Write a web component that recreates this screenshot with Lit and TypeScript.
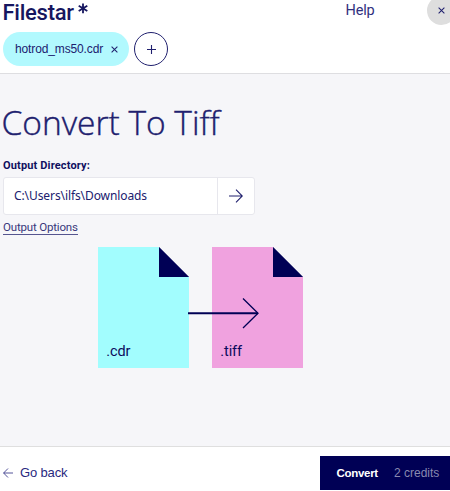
import { LitElement, html, css, svg } from "lit";
import { customElement, property } from "lit/decorators.js";

@customElement("file-sheet")
class FileSheet extends LitElement {
  @property() label = "";
  static styles = css`
    :host { display: flex; flex: none; align-items: flex-end; box-sizing: border-box; width: 90.5px; height: 120.5px; padding: 0 8px 7px;
      background: linear-gradient(45deg, #000055 49.5%, #f6f6f9 50.8%) top right / 30px 30px no-repeat, var(--sheet); }
    .label { font: 14.5px/18px Roboto, sans-serif; letter-spacing: -0.1px; color: #0b0b5c; white-space: nowrap; }
  `;
  render() {
    return html`<span class="label">${this.label}</span>`;
  }
}

@customElement("app-root")
class AppRoot extends LitElement {
  static styles = css`
    :host { display: flex; flex-direction: column; width: 450px; height: 491px; overflow: hidden; background: #f6f6f9; color: #20206e; font-family: Roboto, sans-serif; }
    * { box-sizing: border-box; }
    svg { display: block; flex: none; fill: none; stroke: currentColor; }
    .header { height: 74px; flex: none; background: #fff; border-bottom: 1px solid #dedee1; }
    .top { display: flex; height: 32px; align-items: flex-start; }
    .logo { flex: none; width: 74.5px; margin-left: 2.5px; font: 500 22px/25px Roboto, sans-serif; letter-spacing: -0.25px; color: #16165f; white-space: nowrap; }
    .star { color: #16165f; margin: 3px 0 0 1px; }
    .help { flex: none; margin: 0 0 0 257.5px; width: 80px; font: 14.5px/21px Roboto, sans-serif; letter-spacing: -0.15px; color: #30307e; }
    .close { display: grid; place-items: center; flex: none; width: 29px; height: 29px; margin-top: -4.5px; margin-left: 1.5px; border-radius: 50%; background: #dedede; }
    .tabs { display: flex; gap: 5px; padding-left: 3px; }
    .chip { display: flex; align-items: center; width: 126px; height: 34px; padding-left: 12px; border-radius: 17px; background: #b2f9fe; }
    .chip-name { width: 95.5px; font: 12px/18px "Liberation Sans", sans-serif; letter-spacing: -0.13px; white-space: nowrap; }
    .add { display: grid; place-items: center; width: 34px; height: 34px; border: 1px solid #20206e; border-radius: 50%; }
    .main { flex: 1; min-height: 0; padding-left: 3px; }
    h1 { margin: 24px 0 0 -1.5px; height: 50px; font: 300 33.5px/49px "Open Sans", sans-serif; letter-spacing: 0; -webkit-text-stroke: 0.4px #20206e; color: #20206e; white-space: nowrap; }
    .label { margin-top: 9px; height: 16px; font: 700 11px/17px Roboto, sans-serif; letter-spacing: 0.15px; color: #101060; }
    .field { display: flex; margin-top: 4px; width: 252px; height: 38px; border: 1px solid #e7e7ed; border-radius: 3px; background: #fff; }
    .path { flex: 1; padding-left: 10px; font: 12px/36px "Noto Sans", sans-serif; letter-spacing: -0.09px; white-space: nowrap; }
    .browse { display: grid; place-items: center; width: 37px; border-left: 1px solid #e7e7ed; }
    .options { display: block; width: 74.5px; margin-top: 5px; height: 15px; border-bottom: 1px solid #55558f; font: 11.5px/15px Roboto, sans-serif; letter-spacing: -0.17px; white-space: nowrap; color: #38387b; }
    .diagram { position: relative; display: flex; gap: 23.5px; margin: 12px 0 0 95.3px; }
    .flow { position: absolute; left: 90px; top: 50px; color: #000055; }
    .footer { display: flex; flex: none; height: 45px; background: #fff; border-top: 1px solid #dfdfdf; }
    .back { display: flex; align-items: center; gap: 7px; padding-left: 3px; height: 51px; flex: 1; font: 13px/18px "Liberation Sans", sans-serif; letter-spacing: -0.15px; color: #292980; }
    .convert { display: flex; align-items: center; width: 130px; height: 34px; margin-top: 9px; padding-left: 16.5px; background: #000055; color: #fff; }
    .go { width: 57.5px; font: 700 11.5px/18px "Liberation Sans", sans-serif; letter-spacing: -0.3px; }
    .credits { font: 12px/18px "Liberation Sans", sans-serif; color: #8989b0; white-space: nowrap; }
  `;

  cross = (size: number) => html`<svg width=${size} height=${size} viewBox="0 0 8 8" stroke-width="1.2">${svg`<path d="M.7.7 7.3 7.3M7.3.7.7 7.3"/>`}</svg>`;

  render() {
    return html`
      <div class="header">
        <div class="top">
          <div class="logo">Filestar</div>
          <svg class="star" width="10" height="11" viewBox="0 0 10 11" stroke-width="1.8"><path d="M5 .5V10.3M.7 2.8 9.3 8M.7 8 9.3 2.8" /></svg>
          <div class="help">Help</div>
          <div class="close">${this.cross(7)}</div>
        </div>
        <div class="tabs">
          <div class="chip"><span class="chip-name">hotrod_ms50.cdr</span>${this.cross(7)}</div>
          <div class="add"><svg width="9" height="9" viewBox="0 0 9 9" stroke-width="1.1"><path d="M4.5 0V9M0 4.5H9" /></svg></div>
        </div>
      </div>
      <div class="main">
        <h1>Convert To Tiff</h1>
        <div class="label">Output Directory:</div>
        <div class="field">
          <div class="path">C:\\Users\\ilfs\\Downloads</div>
          <div class="browse"><svg width="14" height="14" viewBox="0 0 14 14" stroke-width="1.1"><path d="M0 7H13.3M7 .7 13.3 7 7 13.3" /></svg></div>
        </div>
        <span class="options">Output Options</span>
        <div class="diagram">
          <file-sheet style="--sheet:#a2fdfe" label=".cdr"></file-sheet>
          <file-sheet style="--sheet:#f0a2df" label=".tiff"></file-sheet>
          <svg class="flow" width="72" height="32" viewBox="0 0 72 32"><path stroke-width="1.9" d="M0 16.2H70" /><path stroke-width="1.3" d="M55 1.5 70 16.2 55 31" /></svg>
        </div>
      </div>
      <div class="footer">
        <div class="back"><svg width="10" height="10" viewBox="0 0 10 10" stroke-width=".8"><path d="M10 5H.6M5 .5.6 5 5 9.5" /></svg><span>Go back</span></div>
        <div class="convert"><span class="go">Convert</span><span class="credits">2 credits</span></div>
      </div>
    `;
  }
}
